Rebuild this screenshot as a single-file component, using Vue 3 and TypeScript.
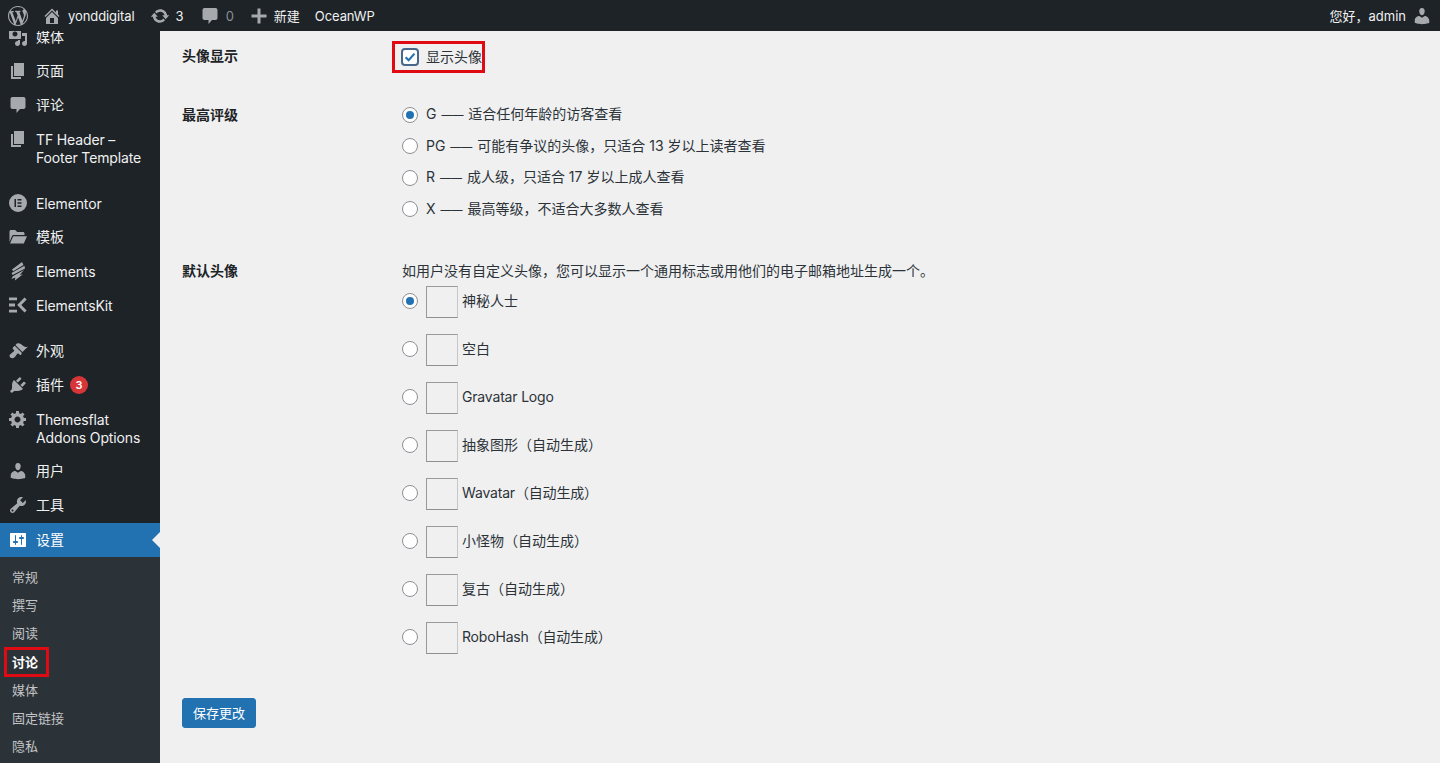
<script setup lang="ts">
const P: Record<string, string> = {
  wp: 'M20 10c0-5.51-4.49-10-10-10C4.48 0 0 4.49 0 10c0 5.52 4.48 10 10 10 5.51 0 10-4.48 10-10zM7.78 15.37L4.37 6.22c.55-.02 1.17-.08 1.17-.08.5-.06.44-1.13-.06-1.11 0 0-1.45.11-2.37.11-.18 0-.37 0-.58-.01C4.12 2.69 6.87 1.11 10 1.11c2.33 0 4.45.87 6.05 2.34-.68-.11-1.65.39-1.65 1.58 0 .74.45 1.36.9 2.1.35.61.55 1.36.55 2.46 0 1.49-1.4 5-1.4 5l-3.03-8.37c.54-.02.82-.17.82-.17.5-.05.44-1.25-.06-1.22 0 0-1.44.12-2.38.12-.87 0-2.33-.12-2.33-.12-.5-.03-.56 1.2-.06 1.22l.92.08 1.26 3.41zM17.41 10c.24-.64.74-1.87.43-4.25.7 1.29 1.05 2.71 1.05 4.25 0 3.29-1.73 6.24-4.4 7.78.97-2.59 1.94-5.2 2.92-7.78zM6.1 18.09C3.12 16.65 1.11 13.53 1.11 10c0-1.3.23-2.48.72-3.59C3.25 10.3 4.67 14.2 6.1 18.09zm4.03-6.63l2.58 6.98c-.86.29-1.76.45-2.71.45-.79 0-1.57-.11-2.29-.33.81-2.38 1.62-4.74 2.42-7.1z',
  home: 'M16 8.5l1.53 1.53-1.06 1.06L10 4.62l-6.47 6.47-1.06-1.06L10 2.5l4 4v-2h2v4zm-6-2.46l6 5.99V18H4v-5.97zM12 17v-5H8v5h4z',
  update: 'M10.2 3.28c3.53 0 6.43 2.61 6.92 6h2.08l-3.5 4-3.5-4h2.32c-.45-1.97-2.21-3.45-4.32-3.45-1.45 0-2.73.71-3.54 1.78L4.95 5.66C6.23 4.2 8.11 3.28 10.2 3.28zm-.4 13.44c-3.52 0-6.43-2.61-6.92-6H.8l3.5-4c1.17 1.33 2.33 2.67 3.5 4H5.48c.45 1.97 2.21 3.45 4.32 3.45 1.45 0 2.73-.71 3.54-1.78l1.71 1.95c-1.28 1.46-3.15 2.38-5.25 2.38z',
  comment: 'M4.500 2h11c1.100 0 2 .9 2 2v8c0 1.100-.9 2-2 2H12l-3.500 4v-4h-4c-1.100 0-2-.9-2-2V4c0-1.100.9-2 2-2z',
  plus: 'M17.500 8.500v3h-6v6h-3v-6h-6v-3h6v-6h3v6z',
  media: 'M13 11V4c0-.55-.45-1-1-1h-1.67L9 1H5L3.67 3H2c-.55 0-1 .45-1 1v7c0 .55.45 1 1 1h10c.55 0 1-.45 1-1zM7 4.5c1.38 0 2.5 1.12 2.5 2.5S8.38 9.5 7 9.5 4.5 8.38 4.5 7 5.62 4.5 7 4.5zM14 6h5v10.5c0 1.38-1.12 2.5-2.5 2.5S14 17.88 14 16.5s1.12-2.5 2.5-2.5c.17 0 .34.02.5.05V9h-3V6zm-4 8.05V13h2v3.5c0 1.38-1.12 2.5-2.5 2.5S7 17.88 7 16.5 8.12 14 9.5 14c.17 0 .34.02.5.05z',
  page: 'M6 15V2h10v13H6zm-1 1h8v2H3V5h2v11z',
  elementor: 'M10 1a9 9 0 1 0 0 18 9 9 0 0 0 0-18zM6.500 6H8v8H6.500zM9.500 6h4v1.500h-4zM9.500 9.250h4v1.500h-4zM9.500 12.500h4V14h-4z',
  folder: 'M1.500 4.500C1.500 3.700 2.200 3 3 3h4.200l2 2H15c.8 0 1.500.7 1.500 1.500V8H5.700c-.8 0-1.500.5-1.800 1.200L1.500 15zM5.200 9.200h13.800l-3.200 7.300H2z',
  bolt: 'M14 1 4 8.500l1.200 1.700L15.500 4zM16.500 4.800 3.500 12l1.100 2L17 7.500zM16 9 4.800 15.300 3.500 18l3.800-1.400-.4 2.900 8.100-6.300-3.300.7z',
  ek: 'M1 2.500h8v2.800H1zM1 8.600h6v2.800H1zM1 14.700h8v2.800H1zM16.500 2.500l2.200 2-5.400 5.500 5.400 5.500-2.200 2L9.200 10z',
  brush: 'M14.480 11.060L7.410 3.990l1.500-1.500c.5-.56 2.300-.47 3.510.32 1.210.8 1.430 1.280 2.910 2.100 1.180.64 2.450 1.260 4.450.85zm-.71.71L6.700 4.700 4.930 6.470c-.39.39-.39 1.020 0 1.410l1.060 1.060c.39.39.39 1.030 0 1.420-.6.6-1.430 1.110-2.210 1.690-.35.26-.7.53-1.010.84C1.430 13.230.99 15.090 2.300 16.400c1.310 1.310 3.170.87 4.510-.47.31-.31.58-.66.85-1.020.57-.78 1.080-1.610 1.690-2.210.39-.39 1.020-.39 1.410 0l1.060 1.060c.39.39 1.020.39 1.410 0z',
  plugin: 'M13.110 4.360L9.870 7.600 8 5.730l3.240-3.240c.35-.34 1.050-.2 1.560.32.52.51.66 1.210.31 1.550zm-8 1.770l.91-1.120 9.010 9.010-1.190.84c-.71.71-2.630 1.160-3.820 1.160H6.140L4.900 17.260c-.59.59-1.540.59-2.120 0-.59-.58-.59-1.530 0-2.120l1.240-1.240v-3.880c0-1.130.4-3.190 1.090-3.890zm7.260 3.970l3.240-3.240c.34-.35 1.040-.21 1.550.31.52.51.66 1.210.31 1.550l-3.240 3.250z',
  gear: 'M18 12h-2.180c-.17.7-.44 1.350-.81 1.930l1.540 1.540-2.100 2.100-1.540-1.540c-.58.36-1.230.63-1.910.79V19H8v-2.180c-.68-.16-1.330-.43-1.910-.79l-1.540 1.540-2.120-2.120 1.540-1.540c-.36-.58-.63-1.230-.79-1.910H1V9.030h2.170c.16-.7.44-1.350.8-1.940L2.430 5.550l2.100-2.100 1.540 1.540c.58-.37 1.240-.64 1.930-.81V2h3v2.180c.68.16 1.330.43 1.910.79l1.540-1.540 2.120 2.120-1.540 1.540c.36.59.64 1.240.8 1.940H18V12zm-8.500 1.500c1.660 0 3-1.340 3-3s-1.340-3-3-3-3 1.340-3 3 1.340 3 3 3z',
  user: 'M10 9.250c-2.270 0-2.730-3.440-2.730-3.440C7 4.020 7.820 2 9.970 2c2.160 0 2.980 2.020 2.710 3.810 0 0-.41 3.440-2.680 3.440zm0 2.570L12.720 10c2.390 0 4.520 2.330 4.520 4.530v2.490s-3.650 1.130-7.240 1.130c-3.650 0-7.240-1.130-7.240-1.130v-2.490c0-2.250 1.940-4.480 4.470-4.480z',
  tools: 'M16.680 9.770c-1.340 1.340-3.300 1.670-4.950.99l-5.410 6.520c-.99.99-2.590.99-3.580 0s-.99-2.590 0-3.570l6.520-5.420c-.68-1.650-.35-3.610.99-4.950 1.280-1.280 3.120-1.620 4.720-1.060l-2.890 2.890 2.820 2.820 2.860-2.870c.53 1.580.18 3.390-1.080 4.650zM3.810 16.210c.4.39 1.040.39 1.430 0 .4-.4.4-1.040 0-1.430-.39-.4-1.030-.4-1.430 0-.39.39-.39 1.030 0 1.430z',
  settings: 'M18 16V4c0-.55-.45-1-1-1H3c-.55 0-1 .45-1 1v12c0 .55.45 1 1 1h14c.55 0 1-.45 1-1zM8 11h1c.55 0 1 .45 1 1s-.45 1-1 1H8v1.500c0 .28-.22.5-.5.5s-.5-.22-.5-.5V13H6c-.55 0-1-.45-1-1s.45-1 1-1h1V5.500c0-.28.22-.5.5-.5s.5.22.5.5V11zm5-2h-1c-.55 0-1-.45-1-1s.45-1 1-1h1V5.500c0-.28.22-.5.5-.5s.5.22.5.5V7h1c.55 0 1 .45 1 1s-.45 1-1 1h-1v5.500c0 .28-.22.5-.5.5s-.5-.22-.5-.5V9z',
}

interface MenuItem { icon: string; lines: string[]; gap?: boolean; badge?: string; active?: boolean }
const menu: MenuItem[] = [
  { icon: 'media', lines: ['媒体'] },
  { icon: 'page', lines: ['页面'] },
  { icon: 'comment', lines: ['评论'] },
  { icon: 'page', lines: ['TF Header –', 'Footer Template'] },
  { icon: 'elementor', lines: ['Elementor'], gap: true },
  { icon: 'folder', lines: ['模板'] },
  { icon: 'bolt', lines: ['Elements'] },
  { icon: 'ek', lines: ['ElementsKit'] },
  { icon: 'brush', lines: ['外观'], gap: true },
  { icon: 'plugin', lines: ['插件'], badge: '3' },
  { icon: 'gear', lines: ['Themesflat', 'Addons Options'] },
  { icon: 'user', lines: ['用户'] },
  { icon: 'tools', lines: ['工具'] },
  { icon: 'settings', lines: ['设置'], active: true },
]
const isLatin = (s: string) => /[a-z]/i.test(s)
const submenu = ['常规', '撰写', '阅读', '讨论', '媒体', '固定链接', '隐私']
const ratings = [
  ['G', '适合任何年龄的访客查看'],
  ['PG', '可能有争议的头像，只适合 13 岁以上读者查看'],
  ['R', '成人级，只适合 17 岁以上成人查看'],
  ['X', '最高等级，不适合大多数人查看'],
]
const avatars = ['神秘人士', '空白', 'Gravatar Logo', '抽象图形（自动生成）', 'Wavatar（自动生成）', '小怪物（自动生成）', '复古（自动生成）', 'RoboHash（自动生成）']
</script>

<template>
  <div class="page">
    <header class="bar">
      <div class="bar-left">
        <svg class="i-wp" viewBox="0 0 20 20"><path :d="P.wp" /></svg>
        <span class="bar-item site"><svg class="i-bar" viewBox="0 0 20 20"><path :d="P.home" /></svg>yonddigital</span>
        <span class="bar-item upd"><svg class="i-bar" viewBox="0 0 20 20"><path :d="P.update" /></svg>3</span>
        <span class="bar-item com"><svg class="i-bar" viewBox="0 0 20 20"><path :d="P.comment" /></svg><span class="dim">0</span></span>
        <span class="bar-item add"><svg class="i-bar" viewBox="0 0 20 20"><path :d="P.plus" /></svg>新建</span>
        <span class="bar-item ocean">OceanWP</span>
      </div>
      <div class="bar-item howdy">您好，admin<svg class="i-bar" viewBox="0 0 20 20"><path :d="P.user" /></svg></div>
    </header>
    <div class="body">
      <aside class="side">
        <nav class="menu">
          <div v-for="m in menu" :key="m.lines[0] + m.icon" class="mi" :class="{ gap: m.gap, active: m.active, latin: isLatin(m.lines[0]) }">
            <svg class="i-menu" viewBox="0 0 20 20"><path :d="P[m.icon]" fill-rule="evenodd" /></svg>
            <div class="mi-text">
              <div v-for="l in m.lines" :key="l">{{ l }}<span v-if="m.badge" class="badge">{{ m.badge }}</span></div>
            </div>
          </div>
          <div class="sub">
            <div v-for="s in submenu" :key="s" class="si" :class="{ cur: s === '讨论' }">{{ s }}</div>
          </div>
        </nav>
      </aside>
      <main class="main">
        <section class="row r1">
          <div class="th">头像显示</div>
          <div class="td">
            <label class="check marked">
              <span class="cb"><svg viewBox="0 0 20 20"><path d="M4.500 10.200l3.800 3.800 7.300-8.200" /></svg></span>
              显示头像
            </label>
          </div>
        </section>
        <section class="row r2">
          <div class="th">最高评级</div>
          <div class="td">
            <label v-for="(r, i) in ratings" :key="r[0]" class="rating"><span class="rd" :class="{ on: i === 0 }"></span><span>{{ r[0] }} <span class="dash">——</span> {{ r[1] }}</span></label>
          </div>
        </section>
        <section class="row r3">
          <div class="th">默认头像</div>
          <div class="td">
            <p class="desc">如用户没有自定义头像，您可以显示一个通用标志或用他们的电子邮箱地址生成一个。</p>
            <label v-for="(a, i) in avatars" :key="a" class="avatar" :class="{ tight: isLatin(a) }"><span class="rd" :class="{ on: i === 0 }"></span><span class="box"></span>{{ a }}</label>
          </div>
        </section>
        <button class="save" type="button">保存更改</button>
      </main>
    </div>
  </div>
</template>

<style scoped>
.page {
  height: 763px;
  overflow: hidden;
  display: flex;
  flex-direction: column;
  background: #f0f0f1;
  color: #2c3338;
  font-family: Inter, "Noto Sans CJK SC", sans-serif;
  font-size: 14px;
  line-height: 18px;
}
svg { fill: currentColor; display: block; flex: none; }

.bar {
  height: 31px;
  flex: none;
  background: #1d2327;
  color: #f0f0f1;
  font-size: 13px;
  display: flex;
  align-items: center;
  justify-content: space-between;
  padding: 0 8px 0 8px;
  position: relative;
  z-index: 1;
}
.bar-left { display: flex; align-items: center; }
.bar-item { display: flex; align-items: center; }
.i-wp { width: 20px; height: 20px; color: #a7aaad; }
.i-bar { width: 20px; height: 20px; color: #a7aaad; }
.site { margin-left: 14px; gap: 6px; letter-spacing: -0.08px; }
.upd { margin-left: 15px; gap: 6px; }
.com { margin-left: 16px; gap: 6px; }
.dim { color: #8c8f94; }
.add { margin-left: 15px; gap: 5px; }
.ocean { margin-left: 15px; letter-spacing: -0.1px; }
.howdy { gap: 6px; }

.body { flex: 1; min-height: 0; display: flex; }
.side { width: 160px; flex: none; background: #1d2327; overflow: hidden; }
.menu { margin-top: -11px; }
.mi {
  position: relative;
  display: flex;
  gap: 8px;
  padding: 8px 0 8px 8px;
  color: #f0f0f1;
}
.mi.gap { margin-top: 12px; }
.mi.latin .mi-text { transform: translateY(1px); letter-spacing: -0.14px; }
.mi.active { background: #2271b1; color: #fff; margin-top: 1px; }
.mi.active .i-menu { color: #fff; }
.mi.active::after {
  content: "";
  position: absolute;
  right: 0;
  top: 9px;
  border: 8px solid transparent;
  border-right-color: #f0f0f1;
  border-left-width: 0;
}
.i-menu { width: 20px; height: 20px; margin: -1px 0; color: #a7aaad; }
.mi-text { white-space: nowrap; }
.badge {
  display: inline-block;
  width: 18px;
  height: 18px;
  margin-left: 6px;
  border-radius: 50%;
  background: #d63638;
  color: #fff;
  font-size: 11px;
  font-weight: 600;
  text-align: center;
  vertical-align: top;
}
.sub { background: #2c3338; padding: 6px 0 7px; }
.si {
  position: relative;
  padding: 5px 12px;
  height: 28.2px;
  box-sizing: border-box;
  font-size: 13px;
  color: #c3c4c7;
}
.si.cur { color: #fff; font-weight: 600; }
.si.cur::after {
  content: "";
  position: absolute;
  left: 4px;
  top: -1px;
  width: 45px;
  height: 30px;
  box-sizing: border-box;
  border: 3px solid #e00b12;
}

.main { flex: 1; padding: 0 0 0 22px; }
.row { display: grid; grid-template-columns: 220px 1fr; }
.th { font-weight: 600; color: #1d2327; }
.r1 { padding-top: 16px; height: 39px; }
.r2 { height: 156px; }
.r2 .th { padding-top: 20px; }
.r2 .td { padding-top: 13px; }
.r3 .th { padding-top: 20px; }
.r3 .td { padding-top: 20px; }

.check { position: relative; display: inline-flex; align-items: center; gap: 8px; margin-top: 1px; }
.cb {
  width: 18px;
  height: 18px;
  margin: 0 -1px;
  box-sizing: border-box;
  border: 2px solid #47688a;
  border-radius: 4px;
  background: #fff;
  display: flex;
  align-items: center;
  justify-content: center;
}
.cb svg { width: 16px; height: 16px; flex: none; fill: none; stroke: #2271b1; stroke-width: 2.600; }
.marked::after {
  content: "";
  position: absolute;
  left: -10px;
  top: -7px;
  width: 93px;
  height: 32px;
  box-sizing: border-box;
  border: 3px solid #e00b12;
}
.rd {
  position: relative;
  width: 16px;
  height: 16px;
  flex: none;
  box-sizing: border-box;
  border: 1px solid #8c8f94;
  border-radius: 50%;
  background: #fff;
}
.rd.on::after {
  content: "";
  position: absolute;
  left: 3px;
  top: 3px;
  width: 8px;
  height: 8px;
  border-radius: 50%;
  background: #2271b1;
}
.rating { display: flex; align-items: center; gap: 8px; height: 31.500px; }
.dash { font-size: 11px; margin: 0 1px; }
.desc { margin: 0 0 6px; height: 18px; }
.avatar { display: flex; align-items: center; gap: 8px; height: 30px; margin-bottom: 18px; }
.avatar.tight { letter-spacing: -0.18px; }
.box {
  width: 32px;
  height: 32px;
  box-sizing: border-box;
  border: 1px solid #9a9a9a;
  border-right-color: #c6c6c6;
  border-bottom-color: #8f8f8f;
  margin: 0 -4px -2px 0;
  align-self: flex-start;
  flex: none;
}
.save {
  display: block;
  margin-top: 28px;
  width: 74px;
  height: 30px;
  padding: 0;
  border: 1px solid #2271b1;
  border-radius: 3px;
  background: #2271b1;
  color: #fff;
  font: inherit;
  font-size: 13px;
}
</style>
